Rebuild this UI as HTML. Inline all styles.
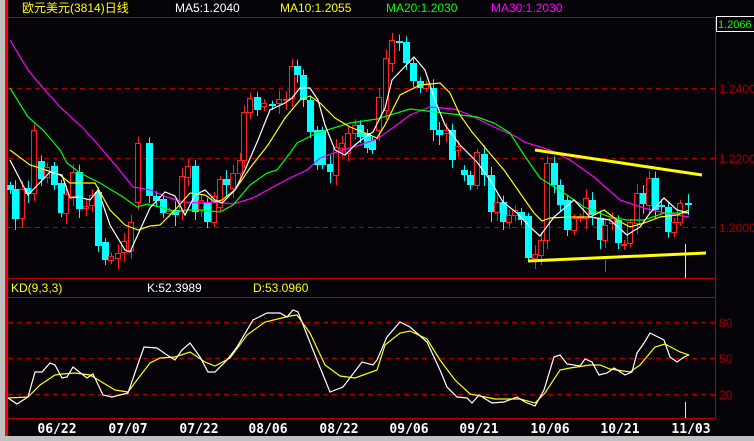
<!DOCTYPE html>
<html><head><meta charset="utf-8"><style>
body{margin:0;background:#000;width:754px;height:441px;overflow:hidden}
svg{display:block}
text{font-family:"Liberation Sans","Noto Sans CJK SC",sans-serif;font-size:12px}
.d{font-family:"DejaVu Sans Mono","Liberation Mono",monospace;font-weight:bold;font-size:13px;fill:#fff}
</style></head><body>
<svg id="s" width="754" height="441" viewBox="0 0 754 441" xmlns="http://www.w3.org/2000/svg">
<rect width="754" height="441" fill="#050308"/>
<rect x="0" y="0" width="5" height="441" fill="#c0c0c0"/>
<rect x="5" y="0" width="3" height="441" fill="#ff0000"/>
<rect x="0" y="436" width="754" height="5" fill="#c0c0c0"/>
<g stroke="#b00000" stroke-width="1" fill="none">
<line x1="8" y1="17.5" x2="716" y2="17.5"/>
<line x1="8" y1="278.5" x2="716" y2="278.5"/>
<line x1="8" y1="297.5" x2="716" y2="297.5"/>
<line x1="8" y1="418.5" x2="716" y2="418.5"/>
<line x1="715.5" y1="17" x2="715.5" y2="419"/>
</g>
<g stroke="#b00000" stroke-dasharray="5,4" fill="none">
<line x1="8" y1="88.5" x2="715" y2="88.5"/>
<line x1="8" y1="158.5" x2="715" y2="158.5"/>
<line x1="8" y1="227.5" x2="715" y2="227.5"/>
<line x1="8" y1="322.5" x2="715" y2="322.5"/>
<line x1="8" y1="358.5" x2="715" y2="358.5"/>
<line x1="8" y1="394.5" x2="715" y2="394.5"/>
</g>
<rect x="716.5" y="16.5" width="40" height="15" fill="none" stroke="#fff"/>
<text x="718" y="28" fill="#00ff00" style="font-size:11px">1.2066</text>
<g fill="#a00000">
<text x="719" y="93">1.2400</text><text x="719" y="163">1.2200</text><text x="719" y="232">1.2000</text>
<text x="719" y="327">80</text><text x="719" y="363">50</text><text x="719" y="399">20</text>
</g>
<text x="22" y="12" fill="#ffff00">欧元美元(3814)日线</text>
<text x="175" y="12" fill="#fff">MA5:1.2040</text>
<text x="280" y="12" fill="#ffff00">MA10:1.2055</text>
<text x="386" y="12" fill="#00ff00">MA20:1.2030</text>
<text x="491" y="12" fill="#ff00ff">MA30:1.2030</text>
<text x="11" y="292" fill="#ffff00">KD(9,3,3)</text>
<text x="147" y="292" fill="#fff">K:52.3989</text>
<text x="253" y="292" fill="#ffff00">D:53.0960</text>
<g class="d" text-anchor="middle">
<text class="d" x="57" y="433">06/22</text><text class="d" x="128" y="433">07/07</text><text class="d" x="199" y="433">07/22</text>
<text class="d" x="268" y="433">08/06</text><text class="d" x="339" y="433">08/22</text><text class="d" x="409" y="433">09/06</text>
<text class="d" x="479" y="433">09/21</text><text class="d" x="550" y="433">10/06</text><text class="d" x="620" y="433">10/21</text>
<text class="d" x="691" y="433">11/03</text>
</g>
<g id="c"></g>
<line x1="535" y1="150" x2="702" y2="175" stroke="#ffff00" stroke-width="3"/>
<line x1="528" y1="261" x2="706" y2="253" stroke="#ffff00" stroke-width="3"/>
<line x1="685.5" y1="244" x2="685.5" y2="278" stroke="#ffff00"/>
<line x1="685.5" y1="402" x2="685.5" y2="418" stroke="#ffff00"/>
</svg>
<script>
var N='http://www.w3.org/2000/svg',g=document.getElementById('c');
function el(t,a){var e=document.createElementNS(N,t);for(var k in a)e.setAttribute(k,a[k]);g.appendChild(e);return e;}
var C=[[10,185,190,'c'],[15,189,219,'c'],[22,189,218,'r'],[28,188,194,'c'],[34,130,193,'r'],[41,161,179,'c'],[47,167,177,'r'],[54,166,185,'c'],[61,183,213,'c'],[66,194,213,'r'],[73,172,196,'r'],[79,172,209,'c'],[86,206,208,'r'],[92,195,205,'r'],[98,192,246,'c'],[105,242,260,'c'],[111,256,260,'r'],[118,253,258,'r'],[124,241,252,'r'],[131,222,250,'r'],[138,143,202,'r'],[149,143,196,'c'],[156,196,201,'c'],[163,199,213,'c'],[169,211,213,'r'],[175,210,215,'c'],[182,176,210,'r'],[188,166,177,'r'],[195,166,212,'c'],[201,200,210,'r'],[207,203,222,'c'],[214,196,222,'r'],[220,179,207,'r'],[226,179,185,'c'],[233,173,188,'r'],[240,160,173,'r'],[244,112,160,'r'],[250,98,112,'r'],[257,97,110,'c'],[264,103,106,'r'],[272,104,106,'c'],[279,99,103,'r'],[286,99,100,'r'],[292,66,98,'r'],[297,66,75,'c'],[303,75,100,'c'],[310,100,132,'c'],[317,130,165,'c'],[322,130,165,'c'],[330,164,172,'c'],[336,147,175,'r'],[342,143,148,'r'],[348,133,153,'r'],[355,125,133,'r'],[360,125,137,'c'],[367,133,148,'c'],[372,140,150,'c'],[379,97,130,'r'],[386,58,110,'r'],[392,40,63,'r'],[399,41,43,'c'],[406,42,63,'c'],[413,63,81,'c'],[420,81,88,'c'],[426,84,88,'r'],[433,88,130,'c'],[439,130,135,'c'],[446,130,133,'r'],[452,130,160,'c'],[458,146,150,'r'],[464,170,175,'c'],[470,175,185,'c'],[477,152,185,'r'],[484,154,175,'c'],[491,175,212,'c'],[497,202,212,'r'],[503,202,222,'c'],[509,215,222,'r'],[515,210,215,'r'],[521,212,220,'c'],[528,216,258,'c'],[535,254,258,'r'],[541,240,255,'r'],[547,163,240,'r'],[554,163,185,'c'],[560,185,205,'c'],[567,200,230,'c'],[574,218,230,'r'],[580,217,218,'r'],[586,198,218,'r'],[592,200,215,'c'],[600,218,240,'c'],[605,225,240,'r'],[612,218,223,'r'],[618,220,243,'c'],[624,244,245,'r'],[630,222,243,'r'],[637,193,223,'r'],[643,193,204,'c'],[649,178,205,'r'],[655,178,210,'c'],[661,205,206,'c'],[668,207,232,'c'],[674,222,232,'r'],[680,203,222,'r'],[688,203,204,'c']];
C.forEach(function(c,i){var col=c[3]=='r'?'#ff2020':'#00ffff';var w=4+((i*7)%8);
el('line',{x1:c[0]+.5,x2:c[0]+.5,y1:c[1]-w*0.8,y2:c[2]+w,stroke:col});
if(c[3]=='r')el('rect',{x:c[0]-2.5,y:c[1]+.5,width:5,height:Math.max(1,c[2]-c[1]),fill:'#050308',stroke:col});
else el('rect',{x:c[0]-3,y:c[1],width:7,height:Math.max(2,c[2]-c[1]),fill:col});});
function pl(p,col){el('polyline',{points:p,fill:'none',stroke:col,'stroke-width':1.2});}
pl('10,40 28,70 43,88 60,107 83,128 100,147 117,167 133,187 150,190 167,197 183,202 200,203 217,202 233,204 253,198 273,187 290,178 307,170 320,158 337,152 360,145 377,139 394,127 410,115 430,107 454,109 470,115 494,127 517,137 524,142 550,150 570,160 594,177 620,200 644,208 660,212 677,215 689,217','#ff00ff');
pl('10,88 28,117 43,130 60,150 67,163 80,173 100,183 123,197 137,207 147,204 160,207 177,212 187,210 200,210 220,212 233,205 250,185 267,173 277,170 290,153 297,143 317,133 350,123 377,119 410,109 444,113 477,117 494,123 510,133 524,155 540,178 564,193 584,207 610,217 627,220 644,220 664,213 677,213 689,213','#00ff00');
pl('10,150 30,165 40,168 60,175 70,183 95,183 110,210 125,225 138,230 150,226 160,225 175,210 190,193 205,195 215,202 222,200 235,190 250,168 268,145 285,118 300,100 310,96 320,103 335,118 350,127 365,133 377,138 385,125 400,95 420,85 440,83 450,93 460,115 472,132 487,150 504,170 520,193 534,213 542,221 550,218 570,217 590,217 604,210 617,220 630,227 644,223 660,217 677,215 689,210','#ffff00');
pl('10,160 28,195 50,172 62,175 70,198 78,197 90,200 98,190 110,225 125,250 130,252 140,230 150,208 165,192 175,196 185,215 195,195 205,190 215,200 222,203 235,190 245,170 258,140 270,110 285,103 292,98 300,88 310,88 318,100 325,125 335,150 345,155 355,145 365,137 373,132 385,108 392,80 414,57 425,70 435,100 445,125 460,145 477,162 490,180 503,202 517,213 530,227 540,236 554,217 574,200 590,217 610,220 627,235 640,227 650,213 664,198 677,210 689,213','#ffffff');
pl('8,398 28,397 40,385 55,375 62,374 75,373 90,375 100,381 115,390 128,392 137,380 150,363 160,358 175,357 190,352 205,362 215,366 230,358 247,335 265,322 290,316 297,315 310,333 325,365 340,376 355,378 377,370 385,345 400,333 410,331 427,339 440,360 455,380 470,394 480,396 495,399 520,399 535,403 545,393 560,370 570,368 590,365 600,365 610,369 630,372 640,365 655,347 665,344 680,352 689,355','#ffff00');
pl('8,398 17,404 28,397 35,372 42,372 50,363 55,365 62,378 67,377 73,367 87,378 93,374 103,395 112,397 128,393 137,367 144,347 157,348 167,355 175,360 182,350 190,343 200,357 208,372 215,372 227,360 237,347 253,320 267,313 280,313 287,317 293,310 298,312 313,350 330,392 343,387 362,362 373,365 377,360 387,337 400,322 410,327 427,342 440,370 447,387 457,397 467,398 472,403 479,395 492,403 504,402 517,397 525,402 535,406 544,390 554,357 560,355 567,364 580,366 585,359 592,362 599,375 607,373 614,368 625,375 632,372 637,353 644,343 650,333 664,340 670,357 677,362 684,357 689,355','#ffffff');
el('line',{x1:605.5,x2:605.5,y1:260,y2:272,stroke:'#ff2020'});
</script>
</body></html>
